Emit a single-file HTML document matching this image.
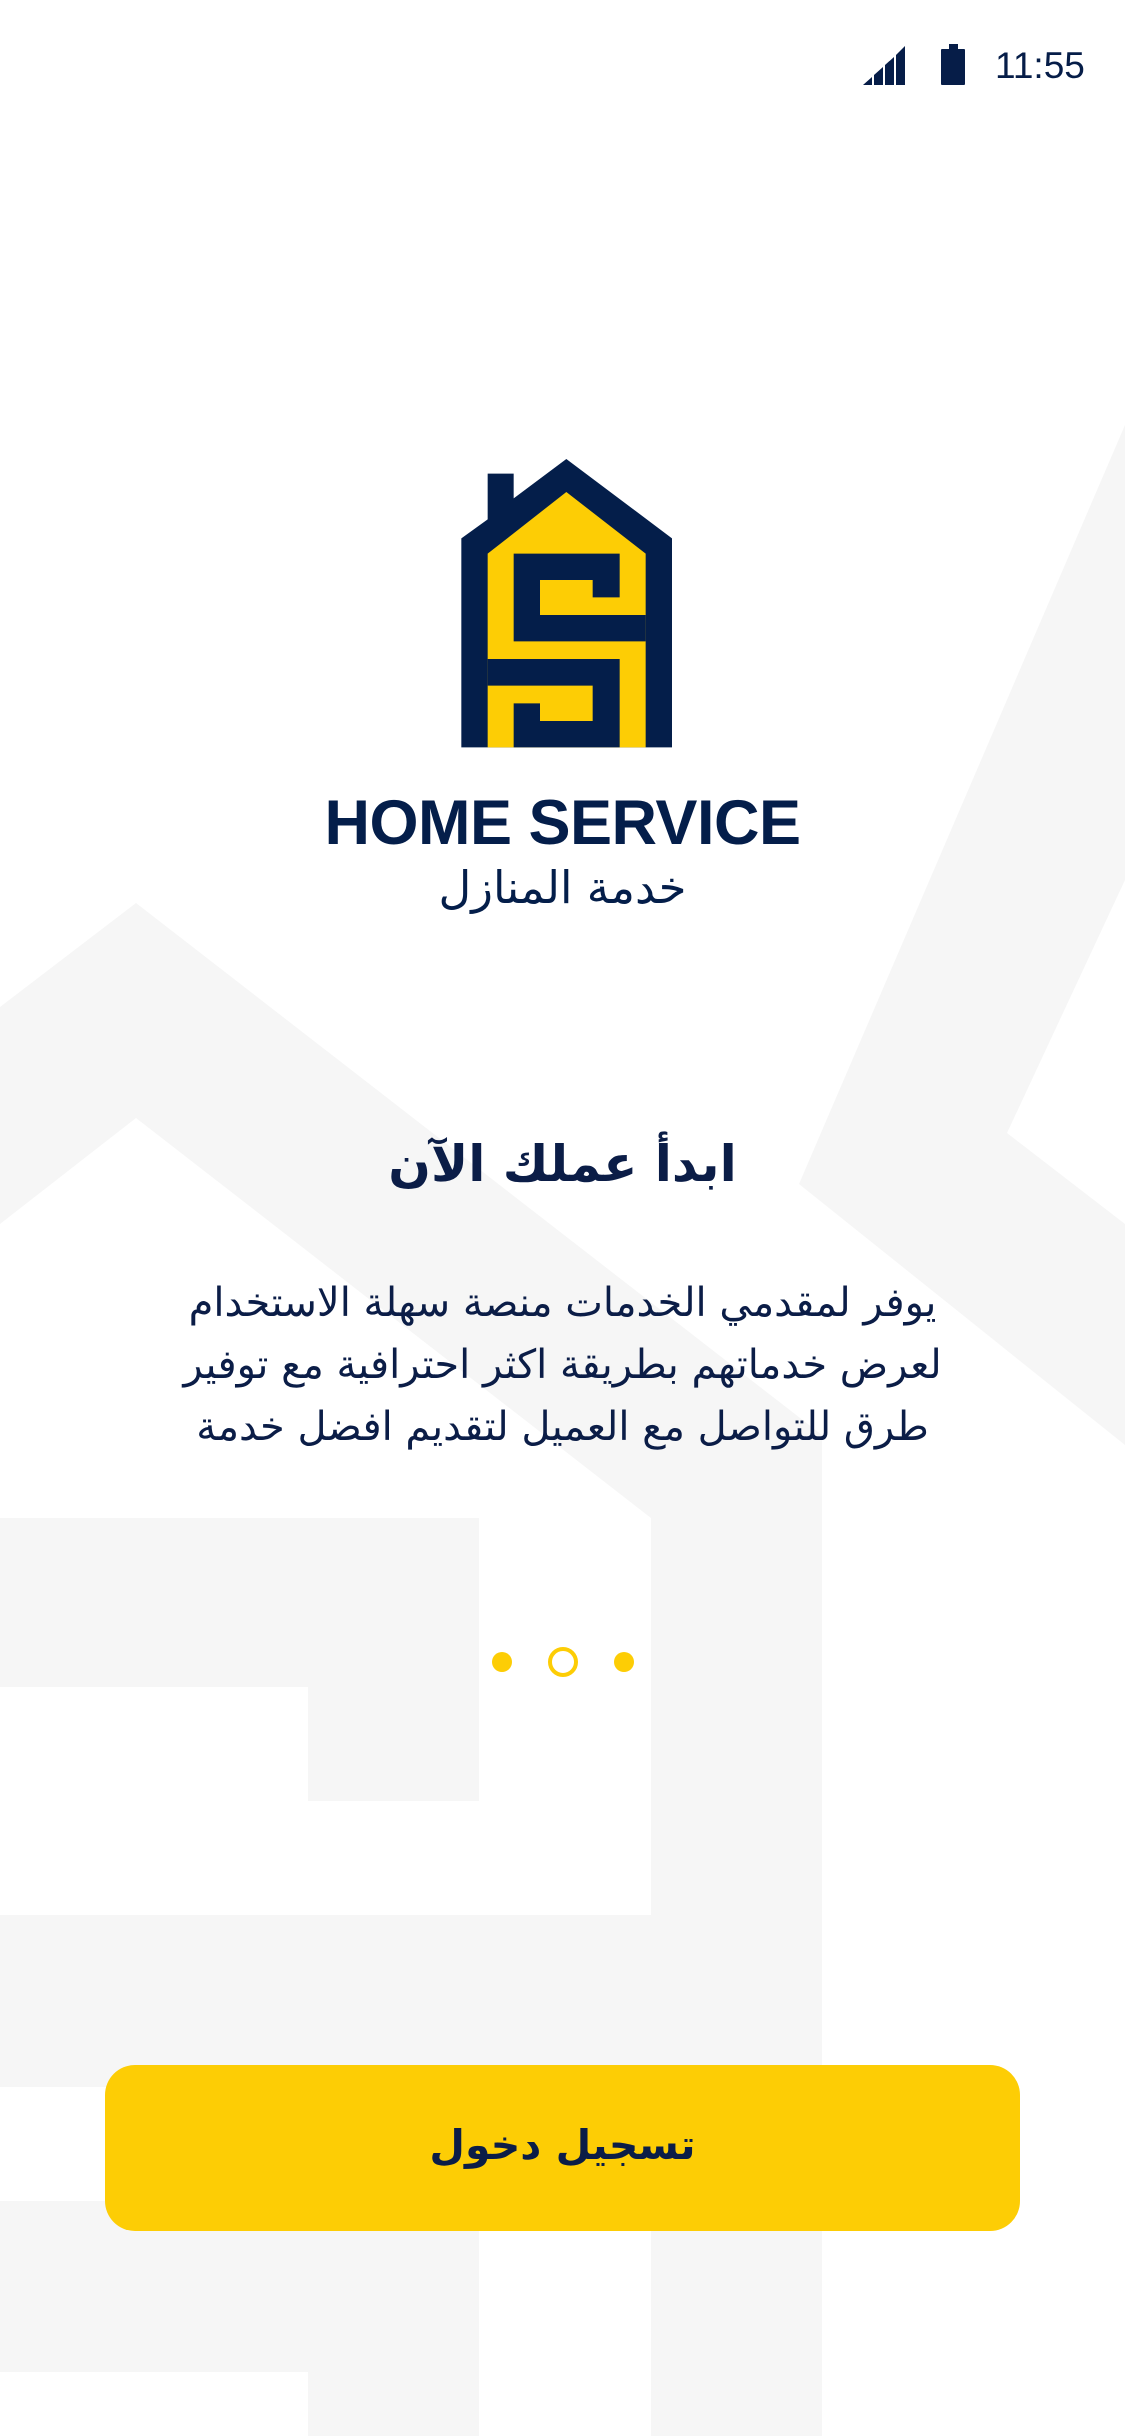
<!DOCTYPE html>
<html><head><meta charset="utf-8"><style>
html,body{margin:0;padding:0}
body{width:1125px;height:2436px;position:relative;overflow:hidden;background:#fff;font-family:"DejaVu Sans",sans-serif;color:#0b1d47}
.abs{position:absolute}
.ar{direction:rtl;white-space:nowrap;text-align:center;left:0;width:1125px}
</style></head><body>
<svg class="abs" style="left:0;top:0" width="1125" height="2436" viewBox="0 0 1125 2436">
<g fill="#f6f6f6">
<polygon points="0,1007 136,903 822,1435 822,2436 651,2436 651,1518 136,1118 0,1224"/>
<rect x="0" y="1518" width="479" height="169"/>
<rect x="308" y="1687" width="171" height="114"/>
<rect x="0" y="1915" width="651" height="172"/>
<rect x="0" y="2201" width="479" height="171"/>
<rect x="308" y="2372" width="171" height="64"/>
<polygon points="1125,425 1125,880 1007,1133 1125,1224 1125,1445 799,1184"/>
</g>
<g fill="#061d48">
<polygon points="863,85 872,77 872,85"/>
<polygon points="874,85 874,75 883,67 883,85"/>
<polygon points="885,85 885,65 894,57 894,85"/>
<polygon points="896,85 896,55 905,46 905,85"/>
<rect x="941" y="49" width="24" height="36" rx="1"/>
<rect x="949" y="44" width="9" height="6"/>
</g>
<text x="995" y="78" font-family="Liberation Sans, sans-serif" font-size="37" fill="#061d48">11:55</text>
</svg>
<svg class="abs" style="left:300px;top:430px" width="525" height="490" viewBox="0 0 1575 1470">
<polygon fill="#041e4a" points="484,325 563,268 563,131 641,131 641,205 799,87 1116,325 1116,952 484,952"/>
<polygon fill="#fdcd05" points="563,371 799,186 1037,371 1037,952 563,952"/>
<polygon fill="#041e4a" points="641,371 959,371 959,502 878,502 878,450 720,450 720,555 1037,555 1037,634 641,634"/>
<polygon fill="#041e4a" points="563,687 959,687 959,952 641,952 641,820 720,820 720,873 878,873 878,767 563,767"/>
</svg>
<div class="abs" style="left:0;width:1125px;top:788px;text-align:center;font-family:'Liberation Sans',sans-serif;font-weight:bold;font-size:63px;line-height:70px;color:#041e4a;letter-spacing:-0.5px">HOME SERVICE</div>
<div class="abs ar" style="top:858px;font-size:45px;line-height:60px;color:#041e4a">خدمة المنازل</div>
<div class="abs ar" style="top:1130px;font-size:50px;font-weight:bold;line-height:68px">ابدأ عملك الآن</div>
<div class="abs ar" style="top:1272px;font-size:40px;line-height:62px">يوفر لمقدمي الخدمات منصة سهلة الاستخدام<br>لعرض خدماتهم بطريقة اكثر احترافية مع توفير<br>طرق للتواصل مع العميل لتقديم افضل خدمة</div>
<div class="abs" style="left:492px;top:1652px;width:20px;height:20px;border-radius:50%;background:#fdcd05"></div>
<div class="abs" style="left:548px;top:1647px;width:22px;height:22px;border-radius:50%;border:4px solid #fdcd05"></div>
<div class="abs" style="left:614px;top:1652px;width:20px;height:20px;border-radius:50%;background:#fdcd05"></div>
<div class="abs" style="left:105px;top:2065px;width:915px;height:166px;border-radius:30px;background:#fdcd05"></div>
<div class="abs ar" style="top:2112px;font-size:41px;font-weight:bold;line-height:66px;color:#0b1d47">تسجيل دخول</div>
</body></html>
